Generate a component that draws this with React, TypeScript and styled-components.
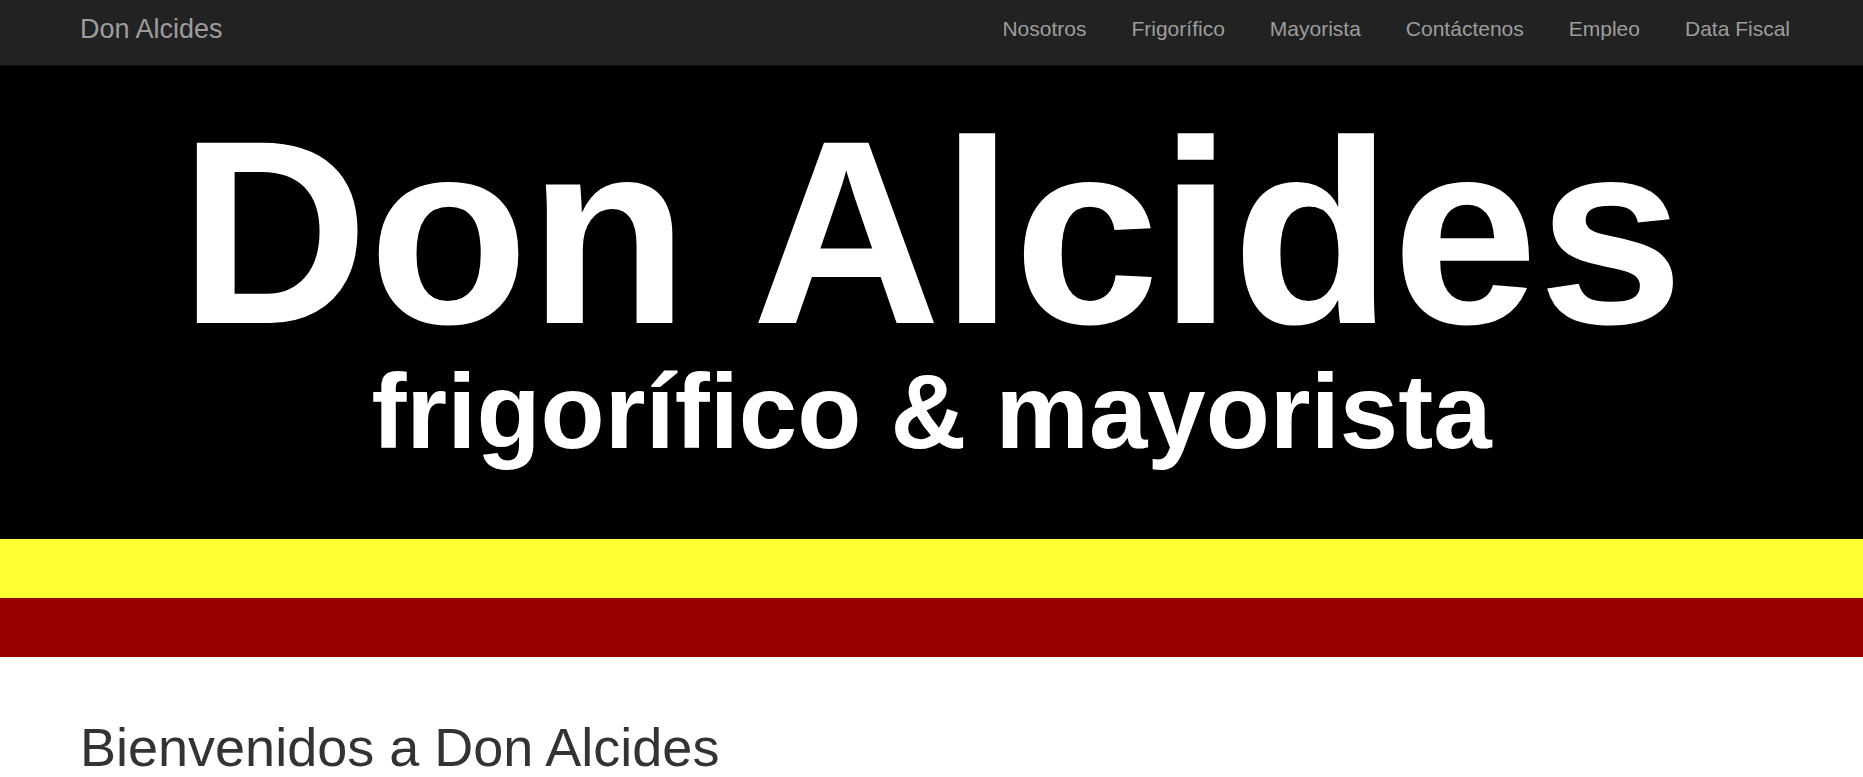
import styled, { createGlobalStyle } from "styled-components";

const GlobalStyle = createGlobalStyle`
  html, body {
    margin: 0;
    padding: 0;
    background: #fff;
    font-family: "Liberation Sans", Arial, Helvetica, sans-serif;
  }
`;

const Navbar = styled.nav`
  background-color: #222;
  border-bottom: 1px solid #101010;
  height: 65px;
`;

const NavContainer = styled.div`
  height: 100%;
  box-sizing: border-box;
  display: flex;
  align-items: center;
  justify-content: space-between;
  padding: 0 73px 7px 80px;
`;

const Brand = styled.a`
  color: #9d9d9d;
  font-size: 27px;
  text-decoration: none;
  cursor: pointer;
`;

const NavList = styled.ul`
  display: flex;
  align-items: center;
  gap: 45px;
  list-style: none;
  margin: 0;
  padding: 0;
`;

const NavLink = styled.a`
  color: #9d9d9d;
  font-size: 21px;
  text-decoration: none;
  cursor: pointer;

  &:hover {
    color: #fff;
  }
`;

const Banner = styled.header`
  background: #000;
  height: 473px;
  box-sizing: border-box;
  padding-top: 38px;
  display: flex;
  flex-direction: column;
  align-items: center;
  color: #fff;
  font-weight: bold;
  overflow: hidden;
`;

const BannerTitle = styled.div`
  font-size: 262px;
  line-height: 257px;
  white-space: nowrap;
`;

const BannerSubtitle = styled.div`
  font-size: 105px;
  line-height: 101px;
  white-space: nowrap;
`;

const Stripe = styled.div<{ $color: string }>`
  height: 59px;
  background: ${(p) => p.$color};
`;

const Main = styled.main`
  padding: 61px 80px 0;
`;

const Heading = styled.h1`
  margin: 0;
  font-size: 54px;
  line-height: 59px;
  font-weight: normal;
  color: #333;
`;

const links = ["Nosotros", "Frigorífico", "Mayorista", "Contáctenos", "Empleo", "Data Fiscal"];

export default function App() {
  return (
    <>
      <GlobalStyle />
      <Navbar>
        <NavContainer>
          <Brand>Don Alcides</Brand>
          <NavList>
            {links.map((l) => (
              <li key={l}>
                <NavLink>{l}</NavLink>
              </li>
            ))}
          </NavList>
        </NavContainer>
      </Navbar>
      <Banner>
        <BannerTitle>Don Alcides</BannerTitle>
        <BannerSubtitle>frigorífico &amp; mayorista</BannerSubtitle>
      </Banner>
      <Stripe $color="#ffff33" />
      <Stripe $color="#990000" />
      <Main>
        <Heading>Bienvenidos a Don Alcides</Heading>
      </Main>
    </>
  );
}
